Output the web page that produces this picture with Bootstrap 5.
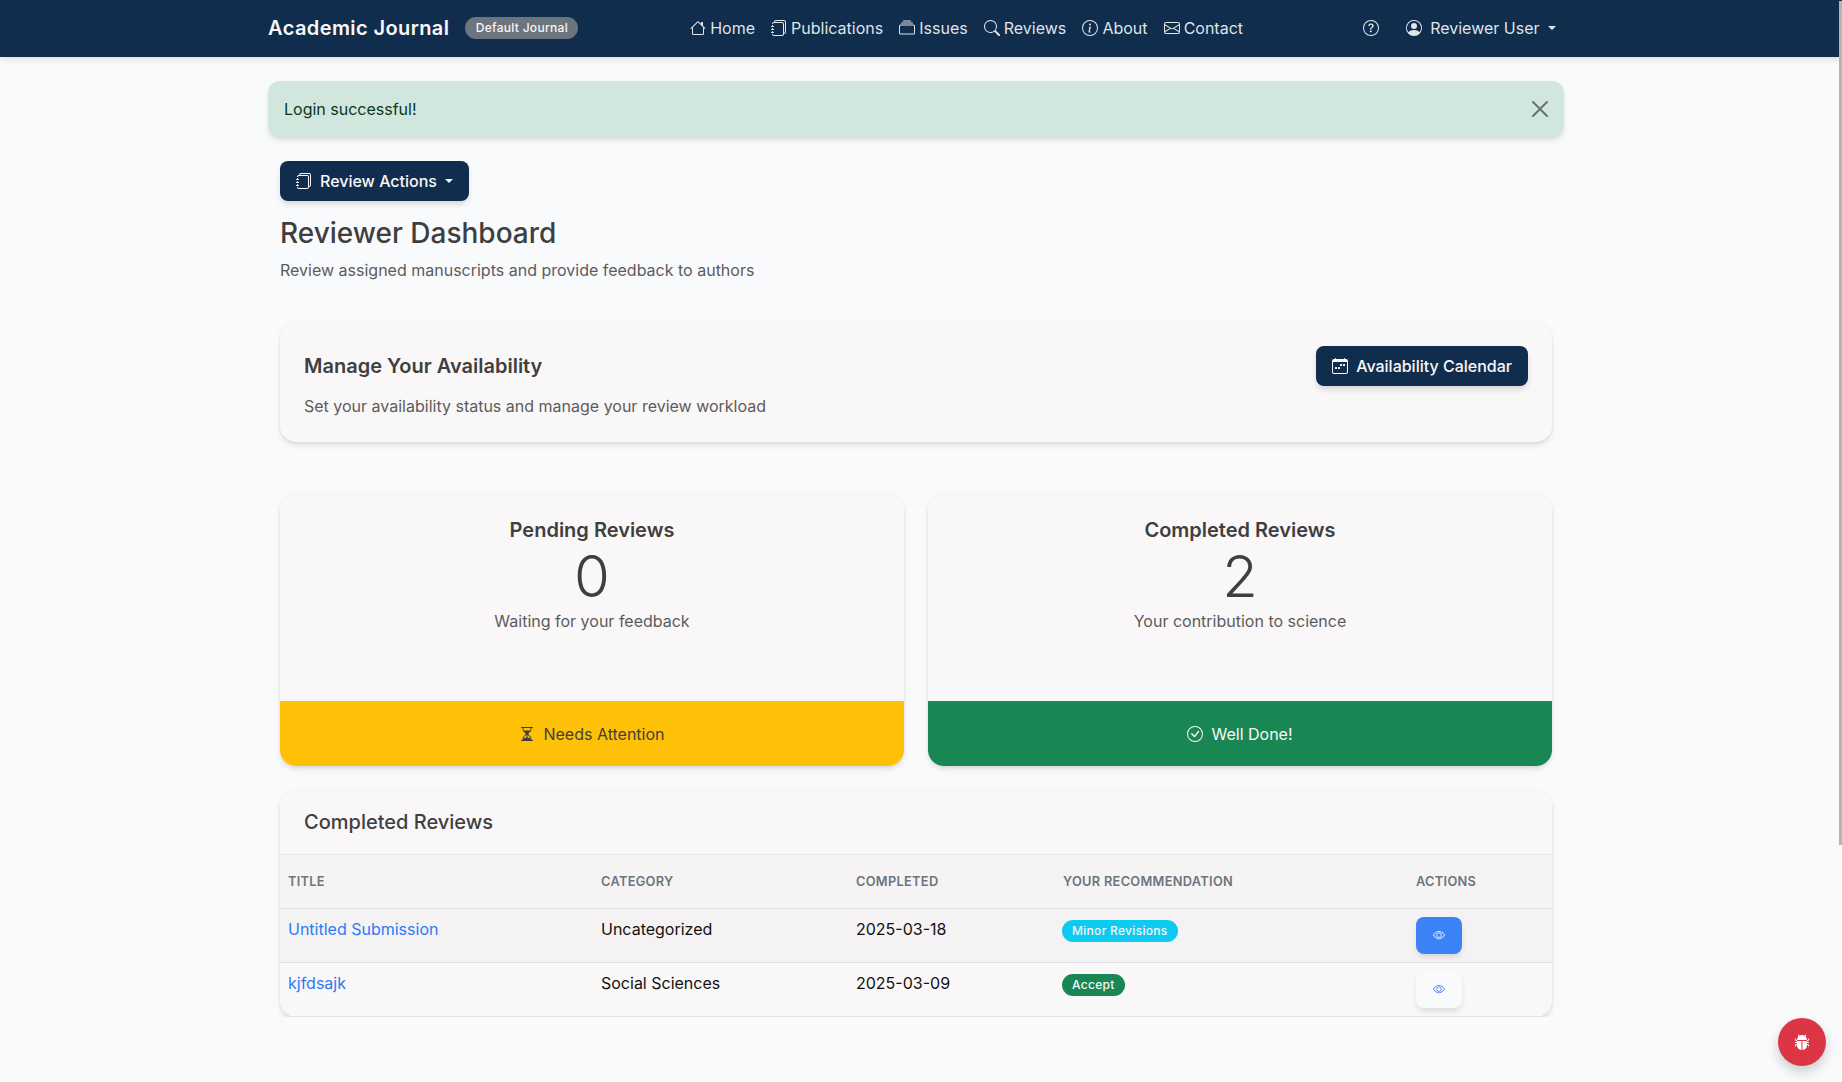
<!DOCTYPE html>
<html lang="en">
<head>
<meta charset="utf-8">
<title>Reviewer Dashboard</title>
<meta name="viewport" content="width=device-width, initial-scale=1">
<link href="https://cdn.jsdelivr.net/npm/bootstrap@5.3.0/dist/css/bootstrap.min.css" rel="stylesheet">
<style>
body { font-family: Inter, "Liberation Sans", sans-serif; background: #f9fafc; color: #3f3f3f; font-size: 16px; }
.ic { width: 16px; height: 16px; fill: currentColor; flex: none; }
.ic-nav { margin-right: 4.1px; }
.topbar { background: #112d4e; height: 57px; padding: 0 10px 1px 0; box-shadow: 0 4px 6px -1px rgba(0,0,0,.1); }
.topbar .navbar-brand { font-size: 20px; font-weight: 600; letter-spacing: .4px; color: #f9f7f7; margin-right: 0; padding: 0; line-height: 24px; }
.topbar .nav-link { color: rgba(255,255,255,.88); padding: 8px; display: flex; align-items: center; }
.topbar .dropdown-toggle::after { margin-left: 8.5px; }
.topbar .user-nav { align-items: center; gap: 11px; }
.topbar .user-nav .ic-user { margin-right: 8.4px; }
.journal-badge { background: #6c757d; color: #f9f7f7; font-size: 12px; font-weight: 500; letter-spacing: .3px; border-radius: 11px; height: 22px; width: 113px; margin-left: 16px; display: flex; align-items: center; justify-content: center; }
.scroll-thumb { position: fixed; top: 1px; right: 0; width: 3.5px; height: 844px; background: #b4b4b4; }
.shell { padding-right: 10px; }
.flash { background: #d1e7dd; color: #0a3622; border: 0; border-radius: 12px; padding: 16px; padding-right: 48px; margin: 24px 0; height: 56px; line-height: 24px; box-shadow: 0 4px 6px -1px rgba(0,0,0,.1), 0 2px 4px -1px rgba(0,0,0,.06); }
.flash .btn-close { padding: 20px 16px; }
.btn-navy { background: #112d4e; color: #f9f7f7; border: 0; height: 40px; border-radius: 8px; padding: 0 16px; font-weight: 500; display: inline-flex; align-items: center; box-shadow: 0 4px 6px -1px rgba(0,0,0,.15); }
.btn-navy:hover, .btn-navy:focus { background: #112d4e; color: #f9f7f7; }
.btn-navy .ic { margin-right: 8px; }
.btn-navy.dropdown-toggle::after { margin-left: 8px; }
.page-title { font-size: 28px; font-weight: 500; line-height: 34px; margin: 15px 0 8px; color: #3f3f3f; }
.page-sub { color: #5c5c5c; margin-bottom: 40px; }
.pane { background: #f9f7f7; border: 0; border-radius: 16px; box-shadow: 0 0 3px rgba(0,0,0,.04), 0 4px 6px -1px rgba(0,0,0,.1), 0 2px 4px -1px rgba(0,0,0,.06); overflow: hidden; }
.avail { padding: 24px; margin-bottom: 51px; height: 120px; }
.avail h2 { font-size: 20px; font-weight: 600; line-height: 24px; margin: 0; padding-top: 8px; }
.avail p { color: #5c5c5c; margin: 0; padding-top: 16px; line-height: 24px; }
.stat-body { height: 208px; padding: 25px 24px 24px; text-align: center; }
.stat-body h3 { font-size: 20px; font-weight: 600; line-height: 25px; margin: 0; }
.stat-num { font-size: 58px; font-weight: 300; line-height: 66px; }
.stat-body p { color: #5c5c5c; margin: 0; line-height: 24px; }
.stat-foot { height: 65px; display: flex; align-items: center; justify-content: center; gap: 8px; }
.foot-warn { background: #ffc107; color: #3f3f3f; }
.foot-ok { background: #198754; color: #f9f7f7; }
.stats { margin-bottom: 24px; }
.list-head { height: 65px; padding: 0 24px; display: flex; align-items: center; border-bottom: 1px solid #ebe9ea; }
.list-head h3 { font-size: 20px; font-weight: 500; margin: 0; }
.rev-table { margin: 0; --bs-table-bg: transparent; color: #111; table-layout: fixed; }
.rev-table th { font-size: 12.8px; font-weight: 600; letter-spacing: .3px; text-transform: uppercase; color: #6c757d; background: #f5f3f4; padding: 8px; height: 53px; vertical-align: middle; border-bottom: 1px solid #e3e1e2; }
.rev-table td { padding: 8px; height: 54px; vertical-align: top; line-height: 24px; border-color: #e3e1e2; color: #111; }
.rev-table .row-hot td { background: #f4f2f3; }
.rev-table a { color: #2b7bf5; text-decoration: none; }
.pill { display: inline-flex; align-items: center; height: 22px; border-radius: 11px; padding: 0 10px; margin: 2px 0 0 -1px; font-size: 12px; font-weight: 500; letter-spacing: .3px; color: #f9f7f7; }
.pill-info { background: #0dcaf0; }
.pill-ok { background: #198754; }
.eye-btn { width: 46px; height: 37px; border: 0; border-radius: 8px; display: flex; align-items: center; justify-content: center; padding: 0; box-shadow: 0 4px 6px -1px rgba(0,0,0,.12); }
.eye-btn .ic { width: 12px; height: 12px; }
.eye-on { background: #3b82f6; color: #f9f7f7; }
.eye-off { background: #f9fafc; color: #3b82f6; }
.bug-fab { position: fixed; right: 16px; bottom: 16px; width: 48px; height: 48px; border-radius: 50%; border: 0; background: #dc3545; color: #fff; display: flex; align-items: center; justify-content: center; box-shadow: 0 6px 12px rgba(0,0,0,.18); }
</style>
</head>
<body>
<svg class="d-none" xmlns="http://www.w3.org/2000/svg">
<symbol id="i-house" viewBox="0 0 16 16"><path d="M8.707 1.5a1 1 0 0 0-1.414 0L.646 8.146a.5.5 0 0 0 .708.708L2 8.207V13.5A1.5 1.5 0 0 0 3.5 15h9a1.5 1.5 0 0 0 1.5-1.5V8.207l.646.647a.5.5 0 0 0 .708-.708L13 5.793V2.5a.5.5 0 0 0-.5-.5h-1a.5.5 0 0 0-.5.5v1.293L8.707 1.5ZM13 7.207V13.5a.5.5 0 0 1-.5.5h-9a.5.5 0 0 1-.5-.5V7.207l5-5 5 5Z"/></symbol>
<symbol id="i-journals" viewBox="0 0 16 16"><path d="M5 0h8a2 2 0 0 1 2 2v10a2 2 0 0 1-2 2 2 2 0 0 1-2 2H3a2 2 0 0 1-2-2h1a1 1 0 0 0 1 1h8a1 1 0 0 0 1-1V4a1 1 0 0 0-1-1H3a1 1 0 0 0-1 1H1a2 2 0 0 1 2-2h8a2 2 0 0 1 2 2v9a1 1 0 0 0 1-1V2a1 1 0 0 0-1-1H5a1 1 0 0 0-1 1H3a2 2 0 0 1 2-2z"/><path d="M1 6v-.5a.5.5 0 0 1 1 0V6h.5a.5.5 0 0 1 0 1h-2a.5.5 0 0 1 0-1H1zm0 3v-.5a.5.5 0 0 1 1 0V9h.5a.5.5 0 0 1 0 1h-2a.5.5 0 0 1 0-1H1zm0 2.5v.5H.5a.5.5 0 0 0 0 1h2a.5.5 0 0 0 0-1H2v-.5a.5.5 0 0 0-1 0z"/></symbol>
<symbol id="i-collection" viewBox="0 0 16 16"><path d="M2.5 3.5a.5.5 0 0 1 0-1h11a.5.5 0 0 1 0 1h-11zm2-2a.5.5 0 0 1 0-1h7a.5.5 0 0 1 0 1h-7zM0 13a1.5 1.5 0 0 0 1.5 1.5h13A1.5 1.5 0 0 0 16 13V6a1.5 1.5 0 0 0-1.5-1.5h-13A1.5 1.5 0 0 0 0 6v7zm1.5.5A.5.5 0 0 1 1 13V6a.5.5 0 0 1 .5-.5h13a.5.5 0 0 1 .5.5v7a.5.5 0 0 1-.5.5h-13z"/></symbol>
<symbol id="i-search" viewBox="0 0 16 16"><path d="M11.742 10.344a6.5 6.5 0 1 0-1.397 1.398h-.001c.03.04.062.078.098.115l3.85 3.85a1 1 0 0 0 1.415-1.414l-3.85-3.85a1.007 1.007 0 0 0-.115-.1zM12 6.5a5.5 5.5 0 1 1-11 0 5.5 5.5 0 0 1 11 0z"/></symbol>
<symbol id="i-info" viewBox="0 0 16 16"><path d="M8 15A7 7 0 1 1 8 1a7 7 0 0 1 0 14zm0 1A8 8 0 1 0 8 0a8 8 0 0 0 0 16z"/><path d="m8.93 6.588-2.29.287-.082.38.45.083c.294.07.352.176.288.469l-.738 3.468c-.194.897.105 1.319.808 1.319.545 0 1.178-.252 1.465-.598l.088-.416c-.2.176-.492.246-.686.246-.275 0-.375-.193-.304-.533L8.93 6.588zM9 4.5a1 1 0 1 1-2 0 1 1 0 0 1 2 0z"/></symbol>
<symbol id="i-envelope" viewBox="0 0 16 16"><path d="M0 4a2 2 0 0 1 2-2h12a2 2 0 0 1 2 2v8a2 2 0 0 1-2 2H2a2 2 0 0 1-2-2V4Zm2-1a1 1 0 0 0-1 1v.217l7 4.2 7-4.2V4a1 1 0 0 0-1-1H2Zm13 2.383-4.708 2.825L15 11.105V5.383Zm-.034 6.876-5.64-3.471L8 9.583l-1.326-.795-5.64 3.47A1 1 0 0 0 2 13h12a1 1 0 0 0 .966-.741ZM1 11.105l4.708-2.897L1 5.383v5.722Z"/></symbol>
<symbol id="i-question" viewBox="0 0 16 16"><path d="M8 15A7 7 0 1 1 8 1a7 7 0 0 1 0 14zm0 1A8 8 0 1 0 8 0a8 8 0 0 0 0 16z"/><path d="M5.255 5.786a.237.237 0 0 0 .241.247h.825c.138 0 .248-.113.266-.25.09-.656.54-1.134 1.342-1.134.686 0 1.314.343 1.314 1.168 0 .635-.374.927-.965 1.371-.673.489-1.206 1.06-1.168 1.987l.003.217a.25.25 0 0 0 .25.246h.811a.25.25 0 0 0 .25-.25v-.105c0-.718.273-.927 1.01-1.486.609-.463 1.244-.977 1.244-2.056 0-1.511-1.276-2.241-2.673-2.241-1.267 0-2.655.59-2.75 2.286zm1.557 5.763c0 .533.425.927 1.01.927.609 0 1.028-.394 1.028-.927 0-.552-.42-.94-1.029-.94-.584 0-1.009.388-1.009.94z"/></symbol>
<symbol id="i-person" viewBox="0 0 16 16"><path d="M11 6a3 3 0 1 1-6 0 3 3 0 0 1 6 0z"/><path fill-rule="evenodd" d="M0 8a8 8 0 1 1 16 0A8 8 0 0 1 0 8zm8-7a7 7 0 0 0-5.468 11.37C3.242 11.226 4.805 10 8 10s4.757 1.225 5.468 2.37A7 7 0 0 0 8 1z"/></symbol>
<symbol id="i-calendar" viewBox="0 0 16 16"><path d="M11 6.5a.5.5 0 0 1 .5-.5h1a.5.5 0 0 1 .5.5v1a.5.5 0 0 1-.5.5h-1a.5.5 0 0 1-.5-.5v-1zm-3 0a.5.5 0 0 1 .5-.5h1a.5.5 0 0 1 .5.5v1a.5.5 0 0 1-.5.5h-1a.5.5 0 0 1-.5-.5v-1zm-5 3a.5.5 0 0 1 .5-.5h1a.5.5 0 0 1 .5.5v1a.5.5 0 0 1-.5.5h-1a.5.5 0 0 1-.5-.5v-1zm3 0a.5.5 0 0 1 .5-.5h1a.5.5 0 0 1 .5.5v1a.5.5 0 0 1-.5.5h-1a.5.5 0 0 1-.5-.5v-1z"/><path d="M3.5 0a.5.5 0 0 1 .5.5V1h8V.5a.5.5 0 0 1 1 0V1h1a2 2 0 0 1 2 2v11a2 2 0 0 1-2 2H2a2 2 0 0 1-2-2V3a2 2 0 0 1 2-2h1V.5a.5.5 0 0 1 .5-.5zM1 4v10a1 1 0 0 0 1 1h12a1 1 0 0 0 1-1V4H1z"/></symbol>
<symbol id="i-hourglass" viewBox="0 0 16 16"><path d="M2.5 15a.5.5 0 1 1 0-1h1v-1a4.5 4.5 0 0 1 2.557-4.06c.29-.139.443-.377.443-.59v-.7c0-.213-.154-.451-.443-.59A4.5 4.5 0 0 1 3.5 3V2h-1a.5.5 0 0 1 0-1h11a.5.5 0 0 1 0 1h-1v1a4.5 4.5 0 0 1-2.557 4.06c-.29.139-.443.377-.443.59v.7c0 .213.154.451.443.59A4.5 4.5 0 0 1 12.5 13v1h1a.5.5 0 0 1 0 1h-11zm2-13v1c0 .537.12 1.045.337 1.5h6.326c.216-.455.337-.963.337-1.5V2h-7zm3 6.35c0 .701-.478 1.236-1.011 1.492A3.5 3.5 0 0 0 4.5 13s.866-1.299 3-1.48V8.35zm1 0v3.17c2.134.181 3 1.48 3 1.48a3.5 3.5 0 0 0-1.989-3.158C8.978 9.586 8.5 9.052 8.5 8.351z"/></symbol>
<symbol id="i-check" viewBox="0 0 16 16"><path d="M8 15A7 7 0 1 1 8 1a7 7 0 0 1 0 14zm0 1A8 8 0 1 0 8 0a8 8 0 0 0 0 16z"/><path d="M10.97 4.97a.235.235 0 0 0-.02.022L7.477 9.417 5.384 7.323a.75.75 0 0 0-1.06 1.06L6.97 11.03a.75.75 0 0 0 1.079-.02l3.992-4.99a.75.75 0 0 0-1.071-1.05z"/></symbol>
<symbol id="i-eye" viewBox="0 0 16 16"><path d="M16 8s-3-5.5-8-5.5S0 8 0 8s3 5.5 8 5.5S16 8 16 8zM1.173 8a13.133 13.133 0 0 1 1.66-2.043C4.12 4.668 5.88 3.5 8 3.5c2.12 0 3.879 1.168 5.168 2.457A13.133 13.133 0 0 1 14.828 8c-.058.087-.122.183-.195.288-.335.48-.83 1.12-1.465 1.755C11.879 11.332 10.119 12.5 8 12.5c-2.12 0-3.879-1.168-5.168-2.457A13.134 13.134 0 0 1 1.172 8z"/><path d="M8 5.5a2.5 2.5 0 1 0 0 5 2.5 2.5 0 0 0 0-5zM4.5 8a3.5 3.5 0 1 1 7 0 3.5 3.5 0 0 1-7 0z"/></symbol>
<symbol id="i-bug" viewBox="0 0 16 16"><path d="M4.978.855a.5.5 0 1 0-.956.29l.41 1.352A4.985 4.985 0 0 0 3 6h10a4.985 4.985 0 0 0-1.432-3.503l.41-1.352a.5.5 0 1 0-.956-.29l-.291.956A4.978 4.978 0 0 0 8 1a4.979 4.979 0 0 0-2.731.811l-.29-.956z"/><path d="M13 6v1H8.5v8.975A5 5 0 0 0 13 11h.5a.5.5 0 0 1 .5.5v.5a.5.5 0 1 0 1 0v-.5a1.5 1.5 0 0 0-1.5-1.5H13V9h1.5a.5.5 0 0 0 0-1H13V7h.5A1.5 1.5 0 0 0 15 5.5V5a.5.5 0 0 0-1 0v.5a.5.5 0 0 1-.5.5H13zm-5.5 9.975V7H3V6h-.5a.5.5 0 0 1-.5-.5V5a.5.5 0 0 0-1 0v.5A1.5 1.5 0 0 0 2.5 7H3v1H1.5a.5.5 0 0 0 0 1H3v1h-.5A1.5 1.5 0 0 0 1 11.5v.5a.5.5 0 1 0 1 0v-.5a.5.5 0 0 1 .5-.5H3a5 5 0 0 0 4.5 4.975z"/></symbol>
</svg>

<nav class="navbar navbar-expand-lg topbar">
  <div class="container-xl">
    <div class="d-flex align-items-center">
      <a class="navbar-brand" href="#">Academic Journal</a>
      <span class="journal-badge">Default Journal</span>
    </div>
    <ul class="navbar-nav mx-auto flex-row">
      <li class="nav-item"><a class="nav-link" href="#"><svg class="ic ic-nav"><use href="#i-house"/></svg>Home</a></li>
      <li class="nav-item"><a class="nav-link" href="#"><svg class="ic ic-nav"><use href="#i-journals"/></svg>Publications</a></li>
      <li class="nav-item"><a class="nav-link" href="#"><svg class="ic ic-nav"><use href="#i-collection"/></svg>Issues</a></li>
      <li class="nav-item"><a class="nav-link" href="#"><svg class="ic ic-nav"><use href="#i-search"/></svg>Reviews</a></li>
      <li class="nav-item"><a class="nav-link" href="#"><svg class="ic ic-nav"><use href="#i-info"/></svg>About</a></li>
      <li class="nav-item"><a class="nav-link" href="#"><svg class="ic ic-nav"><use href="#i-envelope"/></svg>Contact</a></li>
    </ul>
    <ul class="navbar-nav flex-row user-nav">
      <li class="nav-item"><a class="nav-link" href="#" aria-label="Help"><svg class="ic"><use href="#i-question"/></svg></a></li>
      <li class="nav-item dropdown"><a class="nav-link dropdown-toggle" href="#" role="button" data-bs-toggle="dropdown"><svg class="ic ic-user"><use href="#i-person"/></svg>Reviewer User</a></li>
    </ul>
  </div>
</nav>

<div class="shell">
<main class="container-xl">
  <div class="alert flash alert-dismissible" role="alert">Login successful!<button type="button" class="btn-close" aria-label="Close"></button></div>
  <div class="container-fluid">
    <div class="dropdown">
      <button class="btn btn-navy dropdown-toggle" type="button" data-bs-toggle="dropdown"><svg class="ic"><use href="#i-journals"/></svg>Review Actions</button>
    </div>
    <h1 class="page-title">Reviewer Dashboard</h1>
    <p class="page-sub">Review assigned manuscripts and provide feedback to authors</p>

    <section class="pane avail d-flex justify-content-between">
      <div>
        <h2>Manage Your Availability</h2>
        <p>Set your availability status and manage your review workload</p>
      </div>
      <div><a class="btn btn-navy" href="#"><svg class="ic"><use href="#i-calendar"/></svg>Availability Calendar</a></div>
    </section>

    <div class="row g-4 stats">
      <div class="col-6">
        <section class="pane">
          <div class="stat-body">
            <h3>Pending Reviews</h3>
            <div class="stat-num">0</div>
            <p>Waiting for your feedback</p>
          </div>
          <div class="stat-foot foot-warn"><svg class="ic"><use href="#i-hourglass"/></svg>Needs Attention</div>
        </section>
      </div>
      <div class="col-6">
        <section class="pane">
          <div class="stat-body">
            <h3>Completed Reviews</h3>
            <div class="stat-num">2</div>
            <p>Your contribution to science</p>
          </div>
          <div class="stat-foot foot-ok"><svg class="ic"><use href="#i-check"/></svg>Well Done!</div>
        </section>
      </div>
    </div>

    <section class="pane">
      <div class="list-head"><h3>Completed Reviews</h3></div>
      <table class="table rev-table">
        <colgroup><col style="width:313px"><col style="width:255px"><col style="width:207px"><col style="width:353px"><col></colgroup>
        <thead><tr><th>Title</th><th>Category</th><th>Completed</th><th>Your Recommendation</th><th>Actions</th></tr></thead>
        <tbody>
          <tr class="row-hot">
            <td><a href="#">Untitled Submission</a></td><td>Uncategorized</td><td>2025-03-18</td>
            <td><span class="pill pill-info">Minor Revisions</span></td>
            <td><button class="eye-btn eye-on" aria-label="View"><svg class="ic"><use href="#i-eye"/></svg></button></td>
          </tr>
          <tr>
            <td><a href="#">kjfdsajk</a></td><td>Social Sciences</td><td>2025-03-09</td>
            <td><span class="pill pill-ok">Accept</span></td>
            <td><button class="eye-btn eye-off" aria-label="View"><svg class="ic"><use href="#i-eye"/></svg></button></td>
          </tr>
        </tbody>
      </table>
    </section>
  </div>
</main>
</div>
<button class="bug-fab" aria-label="Report a bug"><svg class="ic"><use href="#i-bug"/></svg></button>
<div class="scroll-thumb"></div>
<script src="https://cdn.jsdelivr.net/npm/bootstrap@5.3.0/dist/js/bootstrap.bundle.min.js"></script>
</body>
</html>
